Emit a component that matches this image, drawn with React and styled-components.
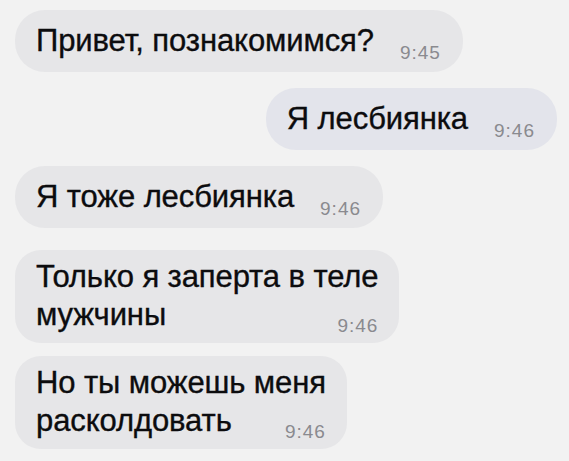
import React from "react";
import styled, { createGlobalStyle } from "styled-components";

const Global = createGlobalStyle`
  html, body {
    margin: 0;
    padding: 0;
    background: #f2f2f2;
  }
  body {
    font-family: "Liberation Sans", Arial, sans-serif;
  }
`;

const Chat = styled.div`
  display: flex;
  flex-direction: column;
  padding: 10px 12px 0 15px;
  gap: 16px;
`;

const Bubble = styled.div`
  display: block;
  width: fit-content;
  max-width: 92%;
  align-self: ${(p) => (p.$out ? "flex-end" : "flex-start")};
  margin-top: ${(p) => (p.$groupStart ? "6px" : p.$tight ? "-3px" : "0")};
  background: ${(p) => (p.$out ? "#e3e4eb" : "#e6e6e8")};
  border-radius: ${(p) => (p.$multi ? "26px" : "30px")};
  padding: ${(p) => (p.$multi ? "8px 21px 9px 21px" : "11px 22px 11px 21px")};
  color: #0c0c0e;
  font-size: 31px;
  line-height: ${(p) => (p.$multi ? "38px" : "40px")};
  letter-spacing: -0.1px;
  -webkit-text-stroke: 0.35px #0c0c0e;
  overflow: hidden;
`;

const Time = styled.span`
  float: right;
  margin-left: 26px;
  position: relative;
  top: ${(p) => (p.$multi ? "11px" : "12px")};
  font-size: 19px;
  letter-spacing: 1px;
  color: #8a8a8f;
  -webkit-text-stroke: 0;
`;

const messages = [
  { lines: ["Привет, познакомимся?"], time: "9:45" },
  { lines: ["Я лесбиянка"], time: "9:46", out: true },
  { lines: ["Я тоже лесбиянка"], time: "9:46" },
  { lines: ["Только я заперта в теле", "мужчины"], time: "9:46", groupStart: true },
  { lines: ["Но ты можешь меня", "расколдовать"], time: "9:46", tight: true },
];

export default function App() {
  return (
    <>
      <Global />
      <Chat>
        {messages.map((m, i) => {
          const multi = m.lines.length > 1;
          return (
            <Bubble
              key={i}
              $out={m.out}
              $multi={multi}
              $groupStart={m.groupStart}
              $tight={m.tight}
            >
              {m.lines.map((l, j) => (
                <React.Fragment key={j}>
                  {j > 0 && <br />}
                  {l}
                </React.Fragment>
              ))}
              <Time $multi={multi}>{m.time}</Time>
            </Bubble>
          );
        })}
      </Chat>
    </>
  );
}
